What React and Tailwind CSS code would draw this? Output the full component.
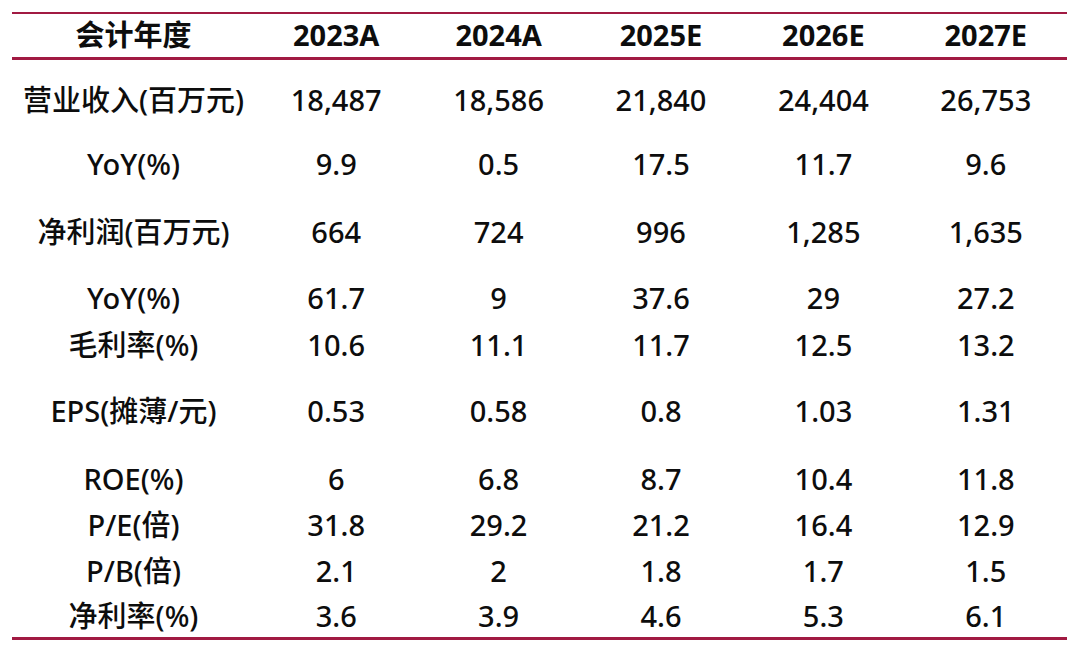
import React from "react";

const years = ["2023A", "2024A", "2025E", "2026E", "2027E"];

// h = row height in px, tuned to the uneven spacing in the source table
const rows = [
  { label: "营业收入(百万元)", h: "h-[82px]", v: ["18,487", "18,586", "21,840", "24,404", "26,753"] },
  { label: "YoY(%)", h: "h-[46px]", v: ["9.9", "0.5", "17.5", "11.7", "9.6"] },
  { label: "净利润(百万元)", h: "h-[90px]", v: ["664", "724", "996", "1,285", "1,635"] },
  { label: "YoY(%)", h: "h-[42px]", v: ["61.7", "9", "37.6", "29", "27.2"] },
  { label: "毛利率(%)", h: "h-[52px]", v: ["10.6", "11.1", "11.7", "12.5", "13.2"] },
  { label: "EPS(摊薄/元)", h: "h-[80px]", v: ["0.53", "0.58", "0.8", "1.03", "1.31"] },
  { label: "ROE(%)", h: "h-[56px]", v: ["6", "6.8", "8.7", "10.4", "11.8"] },
  { label: "P/E(倍)", h: "h-[36px]", v: ["31.8", "29.2", "21.2", "16.4", "12.9"] },
  { label: "P/B(倍)", h: "h-[56px]", v: ["2.1", "2", "1.8", "1.7", "1.5"] },
  { label: "净利率(%)", h: "h-[37px]", v: ["3.6", "3.9", "4.6", "5.3", "6.1"] },
];

const cols = "grid grid-cols-[243px_repeat(5,1fr)] items-center text-center";

export default function App() {
  return (
    <div className="h-[653px] w-[1080px] bg-white pl-[12px] pr-[13px] pt-[12px] font-['Noto_Sans','Noto_Sans_CJK_SC',sans-serif] text-[29px] font-medium leading-none text-[#0d0d0d]">
      <div className="border-t-2 border-[#a11a42]">
        <div className={`${cols} h-[46px] border-b-[3px] border-[#a11a42] pb-[2px] font-bold`}>
          <div>会计年度</div>
          {years.map((y) => (
            <div key={y}>{y}</div>
          ))}
        </div>
        <div className="border-b-[3px] border-[#a11a42]">
          {rows.map((r, i) => (
            <div key={i} className={`${cols} ${r.h} ${i === rows.length - 1 ? "pb-[7px]" : "pb-[4px]"}`}>
              <div>{r.label}</div>
              {r.v.map((x, j) => (
                <div key={j}>{x}</div>
              ))}
            </div>
          ))}
        </div>
      </div>
    </div>
  );
}
